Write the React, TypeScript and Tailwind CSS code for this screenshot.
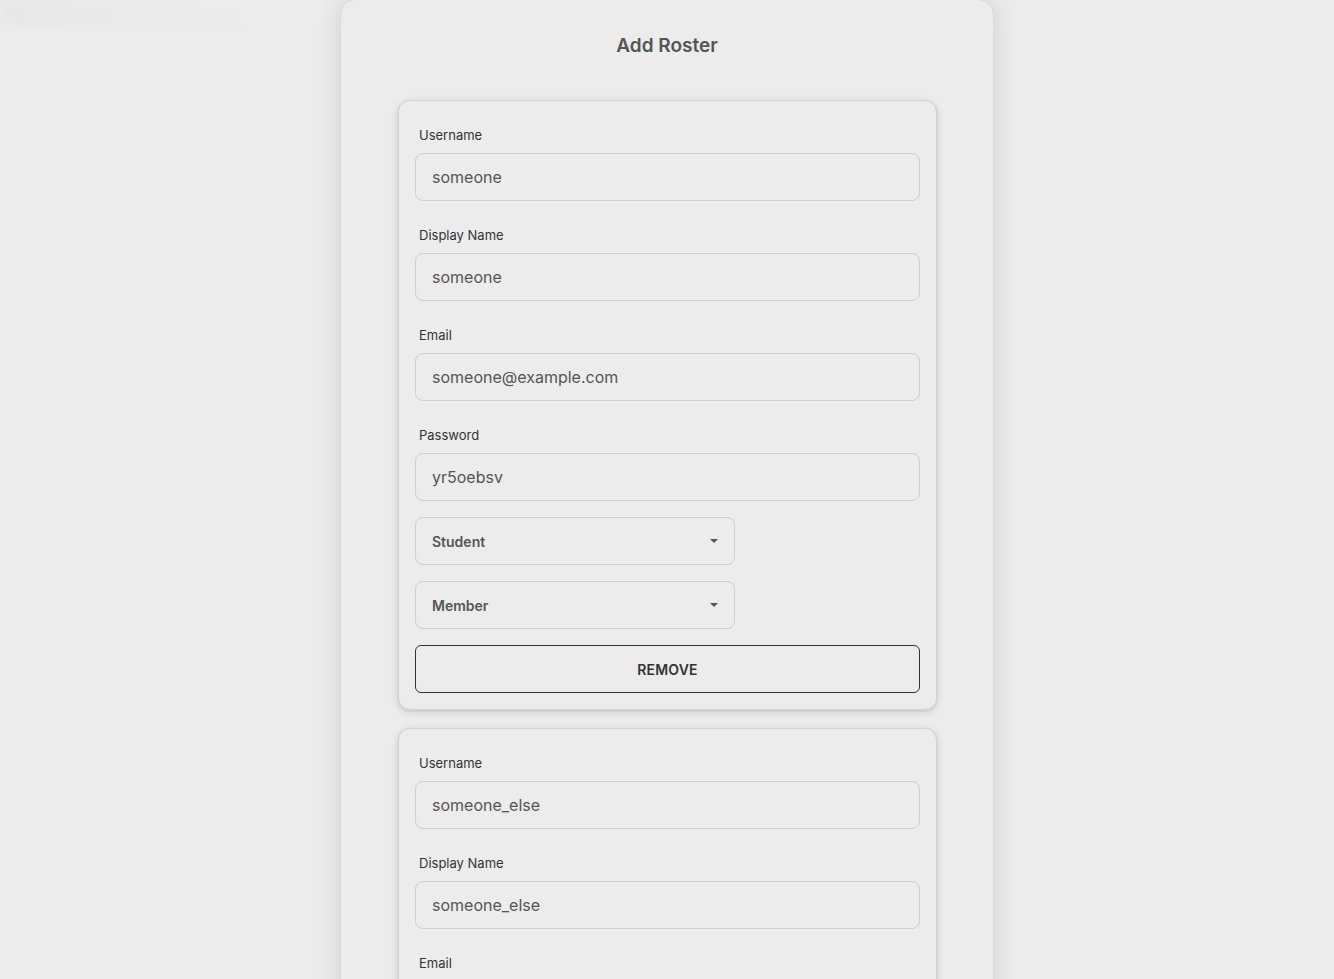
import React from "react";

function Field({ label, value }: { label: string; value: string }) {
  return (
    <div className="flex flex-col">
      <label className="pt-2 pl-1 text-[13px] leading-5 text-[#333]">{label}</label>
      <div className="mt-2 h-12 rounded-lg border border-[#cfcfcf] bg-[#ececec] px-4 flex items-center text-[16px] text-[#555]">
        {value}
      </div>
    </div>
  );
}

function Select({ value }: { value: string }) {
  return (
    <div className="h-12 w-[320px] rounded-lg border border-[#cfcfcf] bg-[#ececec] pl-4 pr-[16px] flex items-center justify-between">
      <span className="text-[14px] font-semibold text-[#555]">{value}</span>
      <svg width="10" height="6" viewBox="0 0 10 6" className="-mr-[1px]">
        <path d="M1 1 L9 1 L5 5 Z" fill="#555" />
      </svg>
    </div>
  );
}

function Entry({ u, d, e, p }: { u: string; d: string; e: string; p: string }) {
  return (
    <div className="rounded-xl border border-[#d2d2d2] bg-[#ececec] p-4 shadow-[0_1px_0_1px_rgba(0,0,0,0.04),0_2px_8px_rgba(0,0,0,0.12)] flex flex-col gap-4">
      <Field label="Username" value={u} />
      <Field label="Display Name" value={d} />
      <Field label="Email" value={e} />
      <Field label="Password" value={p} />
      <Select value="Student" />
      <Select value="Member" />
      <button className="h-12 w-full rounded-md border border-[#333] bg-transparent text-[14px] font-semibold text-[#333] tracking-[0.2px]">
        REMOVE
      </button>
    </div>
  );
}

export default function App() {
  return (
    <div
      className="min-h-screen h-[979px] overflow-hidden bg-[#ececec] relative"
      style={{ fontFamily: "Inter, 'Noto Sans', sans-serif" }}
    >
      <div className="absolute left-0 top-0 w-[260px] h-[26px] bg-gradient-to-r from-[#e6e6e6] to-[#ececec] blur-[6px] opacity-70" />
      <div className="relative mx-auto w-[654px] rounded-t-2xl border border-[#dcdcdc] bg-[#ececec] shadow-[0_0_24px_rgba(0,0,0,0.12)] min-h-[1100px] -mt-px">
        <h1 className="pt-[34px] text-center text-[19px] font-semibold leading-6 text-[#555]">Add Roster</h1>
        <div className="mt-[42px] pl-[57px] pr-[56px] flex flex-col gap-[18px]">
          <Entry u="someone" d="someone" e="someone@example.com" p="yr5oebsv" />
          <Entry u="someone_else" d="someone_else" e="someone_else@example.com" p="abc123" />
        </div>
      </div>
    </div>
  );
}
